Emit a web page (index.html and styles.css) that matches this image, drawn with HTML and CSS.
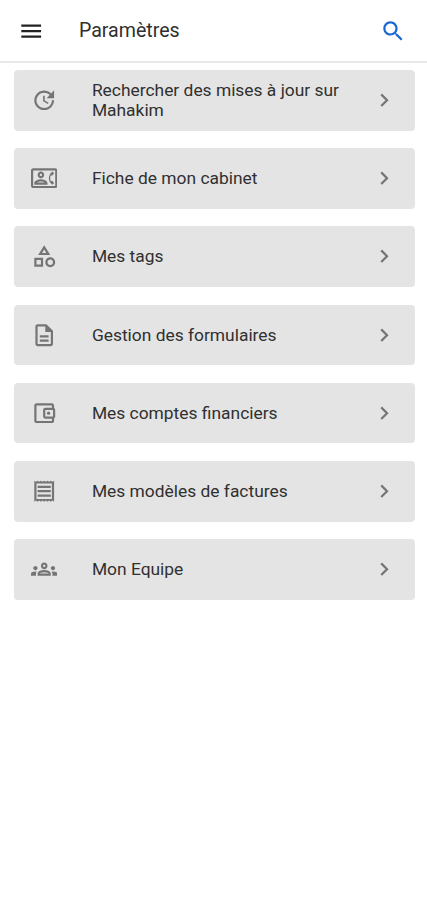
FILE: index.html
```
<!DOCTYPE html>
<html lang="fr">
<head>
<meta charset="utf-8">
<title>Paramètres</title>
<link rel="stylesheet" href="styles.css">
</head>
<body>
<header class="bar">
  <svg class="icon menu" viewBox="0 0 24 24"><path d="M3 18h18v-2H3v2zm0-5h18v-2H3v2zm0-7v2h18V6H3z"/></svg>
  <h1 class="title">Paramètres</h1>
  <svg class="icon search" viewBox="0 0 24 24"><path d="M15.5 14h-.79l-.28-.27C15.41 12.59 16 11.11 16 9.5 16 5.91 13.09 3 9.5 3S3 5.91 3 9.5 5.91 16 9.5 16c1.61 0 3.09-.59 4.23-1.57l.27.28v.79l5 4.99L20.49 19l-4.99-5zm-6 0C7.01 14 5 11.99 5 9.5S7.01 5 9.5 5 14 7.01 14 9.5 11.99 14 9.5 14z"/></svg>
</header>
<main class="list">
  <div class="card">
    <svg class="icon" viewBox="0 0 24 24"><path d="M21 10.12h-6.78l2.74-2.82c-2.73-2.7-7.15-2.8-9.88-.1-2.73 2.71-2.73 7.08 0 9.79s7.15 2.71 9.88 0C18.32 15.65 19 14.08 19 12.1h2c0 1.98-.88 4.55-2.64 6.29-3.51 3.48-9.21 3.48-12.72 0-3.5-3.47-3.53-9.11-.02-12.58s9.14-3.47 12.65 0L21 3v7.12zM12.5 8v4.25l3.5 2.08-.72 1.21L11 13V8h1.5z"/></svg>
    <span class="label">Rechercher des mises à jour sur Mahakim</span>
    <svg class="icon" viewBox="0 0 24 24"><path d="M10 6L8.59 7.41 13.17 12l-4.58 4.59L10 18l6-6z"/></svg>
  </div>
  <div class="card">
    <svg class="icon" viewBox="0 0 24 24"><path d="M22 3H2C.9 3 0 3.900 0 5v14c0 1.100.9 2 2 2h20c1.100 0 1.990-.9 1.990-2L24 5c0-1.100-.9-2-2-2zm0 16H2V5h20v14zM19.480 17.990L21 16.480l-1.510-2.010h-1.640c-.22-.78-.35-1.600-.35-2.470s.13-1.690.35-2.470h1.640L21 7.520l-1.520-1.510C17.520 7.480 16.250 9.600 16.250 12s1.270 4.520 3.230 5.990zM9 12c1.650 0 3-1.350 3-3s-1.350-3-3-3-3 1.350-3 3 1.350 3 3 3zm0-4c.55 0 1 .45 1 1s-.45 1-1 1-1-.45-1-1 .45-1 1-1zm6 8.590c0-2.500-3.970-3.580-6-3.580s-6 1.080-6 3.580V18h12v-1.410zM5.480 16c.74-.5 2.220-1 3.520-1s2.770.49 3.520 1H5.480z"/></svg>
    <span class="label">Fiche de mon cabinet</span>
    <svg class="icon" viewBox="0 0 24 24"><path d="M10 6L8.59 7.41 13.17 12l-4.58 4.59L10 18l6-6z"/></svg>
  </div>
  <div class="card">
    <svg class="icon" viewBox="0 0 24 24"><path d="M12 2l-5.500 9h11L12 2zm0 3.840L13.930 9h-3.870L12 5.840zM17.500 13c-2.490 0-4.500 2.010-4.500 4.500s2.010 4.500 4.500 4.500 4.500-2.010 4.500-4.500-2.010-4.500-4.500-4.500zm0 7c-1.380 0-2.500-1.120-2.500-2.500s1.120-2.500 2.500-2.500 2.500 1.120 2.500 2.500-1.120 2.500-2.500 2.500zM3 21.500h8v-8H3v8zm2-6h4v4H5v-4z"/></svg>
    <span class="label">Mes tags</span>
    <svg class="icon" viewBox="0 0 24 24"><path d="M10 6L8.59 7.41 13.17 12l-4.58 4.59L10 18l6-6z"/></svg>
  </div>
  <div class="card">
    <svg class="icon" viewBox="0 0 24 24"><path d="M8 16h8v2H8zm0-4h8v2H8zm6-10H6c-1.100 0-2 .9-2 2v16c0 1.100.89 2 1.990 2H18c1.100 0 2-.9 2-2V8l-6-6zm4 18H6V4h7v5h5v11z"/></svg>
    <span class="label">Gestion des formulaires</span>
    <svg class="icon" viewBox="0 0 24 24"><path d="M10 6L8.59 7.41 13.17 12l-4.58 4.59L10 18l6-6z"/></svg>
  </div>
  <div class="card">
    <svg class="icon" viewBox="0 0 24 24"><path d="M21 7.280V5c0-1.100-.9-2-2-2H5c-1.110 0-2 .9-2 2v14c0 1.100.89 2 2 2h14c1.100 0 2-.9 2-2v-2.280c.59-.35 1-.98 1-1.720V9c0-.74-.41-1.370-1-1.720zM20 9v6h-7V9h7zM5 19V5h14v2h-6c-1.100 0-2 .9-2 2v6c0 1.100.9 2 2 2h6v2H5z"/><circle cx="16" cy="12" r="1.500"/></svg>
    <span class="label">Mes comptes financiers</span>
    <svg class="icon" viewBox="0 0 24 24"><path d="M10 6L8.59 7.41 13.17 12l-4.58 4.59L10 18l6-6z"/></svg>
  </div>
  <div class="card">
    <svg class="icon" viewBox="0 0 24 24"><path d="M19.500 3.500L18 2.500l-1.500 1L15 2.500l-1.500 1L12 2.500l-1.500 1L9 2.500l-1.500 1L6 2.500l-1.500 1L3 2.500v19l1.500-1L6 21.500l1.500-1 1.500 1 1.500-1 1.500 1 1.500-1 1.500 1 1.500-1 1.500 1 1.500-1 1.500 1v-19l-1.500 1zM19 19.090H5V4.910h14v14.180zM6 15h12v2H6zm0-4h12v2H6zm0-4h12v2H6z"/></svg>
    <span class="label">Mes modèles de factures</span>
    <svg class="icon" viewBox="0 0 24 24"><path d="M10 6L8.59 7.41 13.17 12l-4.58 4.59L10 18l6-6z"/></svg>
  </div>
  <div class="card">
    <svg class="icon" viewBox="0 0 24 24"><path d="M4 13c1.100 0 2-.9 2-2s-.9-2-2-2-2 .9-2 2 .9 2 2 2zm1.130 1.100C4.760 14.040 4.390 14 4 14c-.99 0-1.930.21-2.780.58C.48 14.900 0 15.620 0 16.430V18h4.500v-1.610c0-.83.23-1.610.63-2.290zM20 13c1.100 0 2-.9 2-2s-.9-2-2-2-2 .9-2 2 .9 2 2 2zm4 3.430c0-.81-.48-1.530-1.220-1.850C21.930 14.210 20.990 14 20 14c-.39 0-.76.04-1.130.1.400.68.63 1.460.63 2.290V18H24v-1.570zM16.240 13.650c-1.170-.52-2.610-.9-4.240-.9s-3.070.39-4.240.9C6.680 14.130 6 15.210 6 16.390V18h12v-1.610c0-1.180-.68-2.260-1.760-2.740zM8.070 16c.09-.23.13-.39.91-.69.97-.38 1.990-.56 3.020-.56s2.050.18 3.020.56c.77.3.81.46.91.69H8.070zM12 8c.55 0 1 .45 1 1s-.45 1-1 1-1-.45-1-1 .45-1 1-1m0-2c-1.660 0-3 1.340-3 3s1.340 3 3 3 3-1.340 3-3-1.340-3-3-3z"/></svg>
    <span class="label">Mon Equipe</span>
    <svg class="icon" viewBox="0 0 24 24"><path d="M10 6L8.59 7.41 13.17 12l-4.58 4.59L10 18l6-6z"/></svg>
  </div>
</main>
</body>
</html>
```
FILE: styles.css
```
* {
  box-sizing: border-box;
}

body {
  margin: 0;
  background: #fff;
  color: #303030;
  font-family: Roboto, sans-serif;
}

.bar {
  display: flex;
  align-items: center;
  height: 63px;
  padding: 1px 21px 0 18px;
  border-bottom: 2px solid #e8e8e8;
}

.icon {
  flex: none;
  width: 26.4px;
  height: 26.4px;
  fill: #757575;
}

.menu {
  fill: #222;
}

.search {
  fill: #1967d2;
}

.title {
  flex: 1;
  margin: 0 0 0 34.5px;
  font-size: 19.6px;
  font-weight: 400;
  line-height: 24px;
}

.list {
  display: grid;
  gap: 17.6px;
  padding: 7px 12.5px 0 13.5px;
}

.card {
  display: flex;
  align-items: center;
  height: 60.6px;
  padding: 0 17px;
  border-radius: 4px;
  background: #e4e4e4;
}

.label {
  flex: 1;
  margin: 0 18px 0 35px;
  font-size: 17.4px;
  line-height: 20.6px;
}
```
